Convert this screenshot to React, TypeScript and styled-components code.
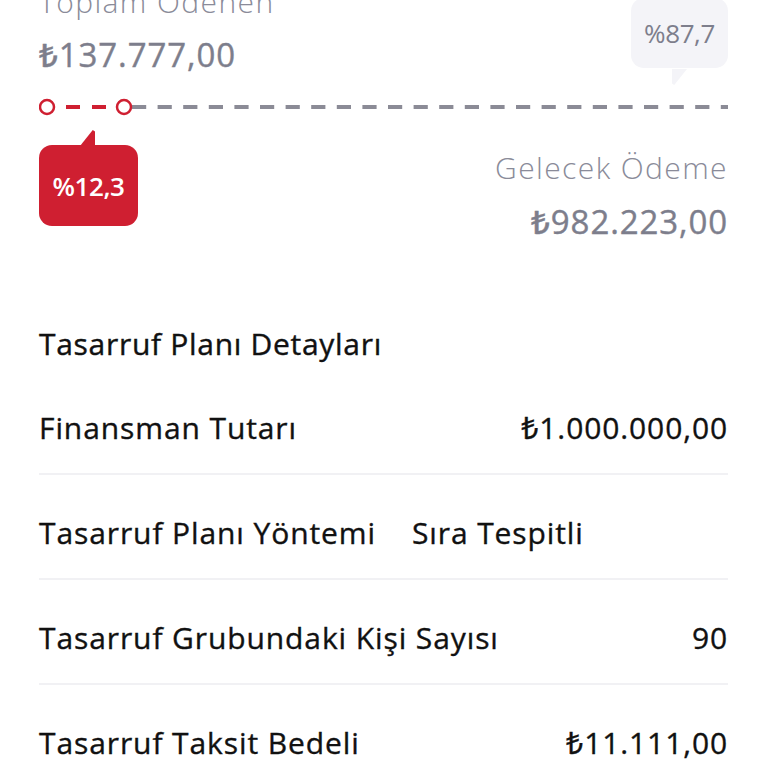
import React from "react";
import styled, { createGlobalStyle } from "styled-components";

const RED = "#cf1f31";
const GRAY = "#7d7e8c";
const LIGHT_GRAY = "#8a8b99";
const DASH_GRAY = "#8b8b96";

const GlobalStyle = createGlobalStyle`
  html, body {
    margin: 0;
    padding: 0;
    background: #ffffff;
    overflow: hidden;
  }
  body {
    font-family: "Open Sans", "Noto Sans", "DejaVu Sans", sans-serif;
    color: #111111;
  }
`;

const Page = styled.div`
  width: 768px;
  box-sizing: border-box;
  padding: 0 40px 0 39px;
  margin-top: -16px;
`;

const TopRow = styled.div`
  display: flex;
  justify-content: space-between;
  align-items: flex-start;
`;

const Column = styled.div<{ $align?: "left" | "right"; $top?: number }>`
  display: flex;
  flex-direction: column;
  align-items: ${(p) => (p.$align === "right" ? "flex-end" : "flex-start")};
  margin-top: ${(p) => p.$top ?? 0}px;
`;

const Caption = styled.div`
  font-size: 30px;
  line-height: 36px;
  font-weight: 300;
  letter-spacing: 1.4px;
  color: ${LIGHT_GRAY};
`;

const Amount = styled.div<{ $gap?: number }>`
  font-size: 33px;
  line-height: 42px;
  font-weight: 500;
  letter-spacing: 0.9px;
  color: ${GRAY};
  -webkit-text-stroke: 0.4px ${GRAY};
  margin-top: ${(p) => p.$gap ?? 14}px;
`;

const Bubble = styled.div<{ $tone: "red" | "gray"; $top: number }>`
  position: relative;
  box-sizing: border-box;
  width: ${(p) => (p.$tone === "red" ? 99 : 97)}px;
  height: ${(p) => (p.$tone === "red" ? 81 : 70)}px;
  margin-top: ${(p) => p.$top}px;
  border-radius: 13px;
  display: flex;
  align-items: center;
  justify-content: center;
  font-size: 26px;
  font-weight: ${(p) => (p.$tone === "red" ? 600 : 400)};
  letter-spacing: -0.4px;
  background: ${(p) => (p.$tone === "red" ? RED : "#f4f4f8")};
  color: ${(p) => (p.$tone === "red" ? "#ffffff" : GRAY)};

  &::before {
    content: "";
    position: absolute;
    width: 15px;
    height: 16px;
    background: inherit;
    ${(p) =>
      p.$tone === "red"
        ? `left: 41px; top: -15px; clip-path: polygon(0 100%, 85% 0, 100% 10%, 100% 100%);`
        : `left: 41px; bottom: -17px; clip-path: polygon(0 0, 100% 0, 15% 100%, 0 90%);`}
  }
`;

const Track = styled.svg`
  display: block;
  margin-top: 21px;
`;

const BottomRow = styled.div`
  display: flex;
  justify-content: space-between;
  align-items: flex-start;
`;

const SectionTitle = styled.h2`
  margin: 83px 0 8px;
  font-size: 30px;
  line-height: 36px;
  font-weight: 500;
  letter-spacing: 0.7px;
  color: #111111;
  -webkit-text-stroke: 0.4px #111111;
`;

const Row = styled.div<{ $inline?: boolean }>`
  display: flex;
  justify-content: ${(p) => (p.$inline ? "flex-start" : "space-between")};
  gap: 36px;
  padding: 40px 0 27px;
  font-size: 30px;
  line-height: 36px;
  letter-spacing: 0.9px;
  border-bottom: 2px solid #f1f1f4;
  -webkit-text-stroke: 0.35px #111111;

  &:last-child {
    border-bottom: none;
  }
`;

const Label = styled.span`
  font-weight: 500;
`;

const Value = styled.span`
  font-weight: 400;
`;

const ProgressTrack = ({ percent }: { percent: number }) => {
  const width = 689;
  const start = 8;
  const end = 85;
  return (
    <Track width={width} height={20} viewBox={`0 0 ${width} 20`} data-percent={percent}>
      <line
        x1={93}
        y1={10}
        x2={width}
        y2={10}
        stroke={DASH_GRAY}
        strokeWidth={4}
        strokeDasharray="14.2 11.4"
      />
      <line
        x1={start}
        y1={10}
        x2={end}
        y2={10}
        stroke={RED}
        strokeWidth={4}
        strokeDasharray="14 12"
        strokeDashoffset={7}
      />
      <circle cx={start} cy={10} r={7} fill="#fff" stroke={RED} strokeWidth={2.5} />
      <circle cx={end} cy={10} r={7} fill="#fff" stroke={RED} strokeWidth={2.5} />
    </Track>
  );
};

const details = [
  { label: "Finansman Tutarı", value: "₺1.000.000,00" },
  { label: "Tasarruf Planı Yöntemi", value: "Sıra Tespitli", inline: true },
  { label: "Tasarruf Grubundaki Kişi Sayısı", value: "90" },
  { label: "Tasarruf Taksit Bedeli", value: "₺11.111,00" },
];

export default function App() {
  return (
    <>
      <GlobalStyle />
      <Page>
        <TopRow>
          <Column>
            <Caption>Toplam Ödenen</Caption>
            <Amount>₺137.777,00</Amount>
          </Column>
          <Bubble $tone="gray" $top={14}>
            %87,7
          </Bubble>
        </TopRow>
        <ProgressTrack percent={12.3} />
        <BottomRow>
          <Bubble $tone="red" $top={28}>
            %12,3
          </Bubble>
          <Column $align="right" $top={33}>
            <Caption>Gelecek Ödeme</Caption>
            <Amount $gap={15}>₺982.223,00</Amount>
          </Column>
        </BottomRow>
        <SectionTitle>Tasarruf Planı Detayları</SectionTitle>
        {details.map((d) => (
          <Row key={d.label} $inline={d.inline}>
            <Label>{d.label}</Label>
            <Value>{d.value}</Value>
          </Row>
        ))}
      </Page>
    </>
  );
}
